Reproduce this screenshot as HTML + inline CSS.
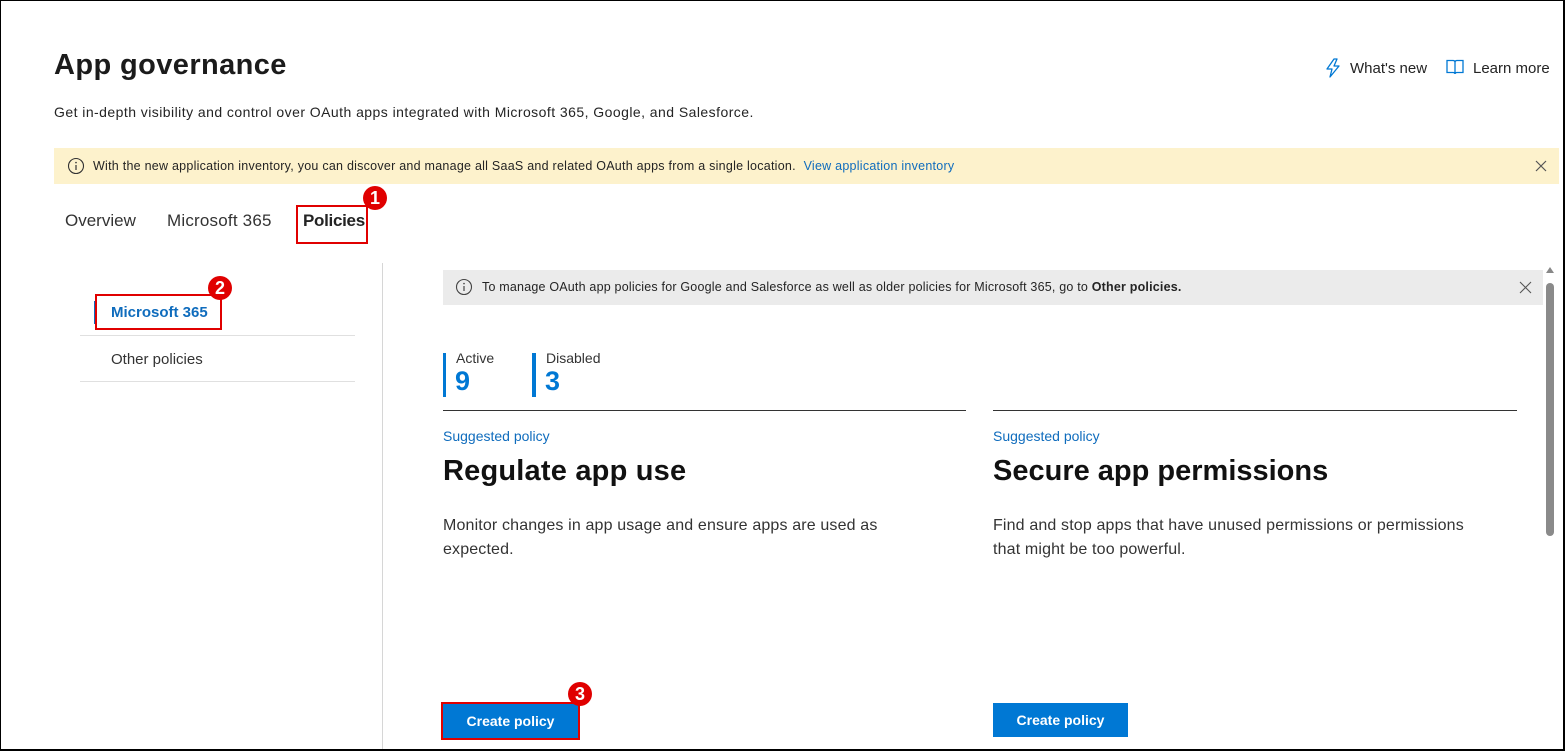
<!DOCTYPE html>
<html><head><meta charset="utf-8"><style>
*{margin:0;padding:0;box-sizing:border-box}
body{width:1565px;height:751px;overflow:hidden;background:#fff;font-family:"Liberation Sans",sans-serif;color:#242424;position:relative}
.a{position:absolute;white-space:nowrap}
.frame{position:absolute;left:0;top:0;width:1565px;height:751px;border:1px solid #000;border-right-width:2px;border-bottom-width:2px;pointer-events:none}
.badge{position:absolute;width:24px;height:24px;border-radius:50%;background:#e00000;color:#fff;font-weight:bold;font-size:18px;text-align:center;line-height:24px}
.red{position:absolute;border:2px solid #e00000}
.btn{position:absolute;background:#0078d4;color:#fff;font-weight:bold;font-size:14px;text-align:center;line-height:34px;height:34px}
</style></head><body>
<div class="a" style="left:54px;top:49px;font-size:29px;font-weight:bold;color:#1b1b1b;letter-spacing:0.4px">App governance</div>
<div class="a" style="left:54px;top:104px;font-size:14px;letter-spacing:0.45px">Get in-depth visibility and control over OAuth apps integrated with Microsoft 365, Google, and Salesforce.</div>
<svg class="a" style="left:1325px;top:58px" width="16" height="20" viewBox="0 0 16 20"><path d="M9 1 L2 11 H7 L5 19 L14 8 H9 L12 1 Z" fill="none" stroke="#0078d4" stroke-width="1.3" stroke-linejoin="round"/></svg>
<div class="a" style="left:1350px;top:60px;font-size:15px">What's new</div>
<svg class="a" style="left:1446px;top:59px" width="18" height="16" viewBox="0 0 18 16"><path d="M1 1.5H7Q9 1.5 9 3.5V15Q9 13.5 7 13.5H1Z M17 1.5H11Q9 1.5 9 3.5V15Q9 13.5 11 13.5H17Z" fill="none" stroke="#0078d4" stroke-width="1.3"/></svg>
<div class="a" style="left:1473px;top:60px;font-size:15px">Learn more</div>
<div class="a" style="left:54px;top:148px;width:1505px;height:36px;background:#fdf2cc"></div>
<svg class="a" style="left:67px;top:157px" width="18" height="18" viewBox="0 0 18 18"><circle cx="9" cy="9" r="7.5" fill="none" stroke="#333" stroke-width="1.1"/><path d="M9 8v5" stroke="#333" stroke-width="1.2"/><circle cx="9" cy="5.6" r=".8" fill="#333"/></svg>
<div class="a" style="left:93px;top:159px;font-size:12.5px;letter-spacing:0.25px">With the new application inventory, you can discover and manage all SaaS and related OAuth apps from a single location. <span style="color:#0f6cbd;margin-left:4px">View application inventory</span></div>
<svg class="a" style="left:1534px;top:159px" width="14" height="14" viewBox="0 0 14 14"><path d="M2 2L12 12M12 2L2 12" stroke="#555" stroke-width="1.2"/></svg>
<div class="a" style="left:65px;top:211px;font-size:17px;color:#333">Overview</div>
<div class="a" style="left:167px;top:211px;font-size:17px;color:#333;letter-spacing:0.2px">Microsoft 365</div>
<div class="a" style="left:303px;top:211px;font-size:17px;font-weight:bold;color:#242424;letter-spacing:-0.3px">Policies</div>
<div class="a" style="left:303px;top:242px;width:59px;height:2px;background:#0f6cbd"></div>
<div class="red" style="left:296px;top:205px;width:72px;height:39px"></div>
<div class="badge" style="left:363px;top:186px">1</div>
<div class="a" style="left:94px;top:301px;width:3px;height:23px;background:#0f6cbd"></div>
<div class="a" style="left:111px;top:304px;font-size:15px;font-weight:bold;color:#0f6cbd">Microsoft 365</div>
<div class="red" style="left:95px;top:294px;width:127px;height:36px"></div>
<div class="badge" style="left:208px;top:276px">2</div>
<div class="a" style="left:80px;top:335px;width:275px;height:1px;background:#e0e0e0"></div>
<div class="a" style="left:111px;top:351px;font-size:15px;color:#333">Other policies</div>
<div class="a" style="left:80px;top:381px;width:275px;height:1px;background:#e0e0e0"></div>
<div class="a" style="left:382px;top:263px;width:1px;height:488px;background:#d6d6d6"></div>
<div class="a" style="left:443px;top:270px;width:1100px;height:35px;background:#ebebeb"></div>
<svg class="a" style="left:455px;top:278px" width="18" height="18" viewBox="0 0 18 18"><circle cx="9" cy="9" r="7.5" fill="none" stroke="#444" stroke-width="1.1"/><path d="M9 8v5" stroke="#444" stroke-width="1.2"/><circle cx="9" cy="5.6" r=".8" fill="#444"/></svg>
<div class="a" style="left:482px;top:280px;font-size:12.5px;letter-spacing:0.2px">To manage OAuth app policies for Google and Salesforce as well as older policies for Microsoft 365, go to <b>Other policies.</b></div>
<svg class="a" style="left:1519px;top:281px" width="13" height="13" viewBox="0 0 13 13"><path d="M1 1L12 12M12 1L1 12" stroke="#555" stroke-width="1.1"/></svg>
<div class="a" style="left:443px;top:353px;width:3px;height:44px;background:#0078d4"></div>
<div class="a" style="left:456px;top:350px;font-size:14px;color:#333">Active</div>
<div class="a" style="left:455px;top:366px;font-size:27px;font-weight:bold;color:#0078d4">9</div>
<div class="a" style="left:532px;top:353px;width:4px;height:44px;background:#0078d4"></div>
<div class="a" style="left:546px;top:350px;font-size:14px;color:#333">Disabled</div>
<div class="a" style="left:545px;top:366px;font-size:27px;font-weight:bold;color:#0078d4">3</div>
<div class="a" style="left:443px;top:410px;width:523px;height:1px;background:#333"></div>
<div class="a" style="left:993px;top:410px;width:524px;height:1px;background:#333"></div>
<div class="a" style="left:443px;top:428px;font-size:14px;color:#0f6cbd">Suggested policy</div>
<div class="a" style="left:993px;top:428px;font-size:14px;color:#0f6cbd">Suggested policy</div>
<div class="a" style="left:443px;top:455px;font-size:29px;font-weight:bold;color:#111;letter-spacing:0.2px">Regulate app use</div>
<div class="a" style="left:993px;top:455px;font-size:29px;font-weight:bold;color:#111">Secure app permissions</div>
<div class="a" style="left:443px;top:514px;font-size:16px;line-height:24px;white-space:normal;width:470px;color:#333;letter-spacing:0.15px">Monitor changes in app usage and ensure apps are used as expected.</div>
<div class="a" style="left:993px;top:514px;font-size:16px;line-height:24px;white-space:normal;width:500px;color:#333;letter-spacing:0.15px">Find and stop apps that have unused permissions or permissions that might be too powerful.</div>
<div class="btn" style="left:443px;top:704px;width:135px">Create policy</div>
<div class="red" style="left:441px;top:702px;width:139px;height:38px"></div>
<div class="badge" style="left:568px;top:682px">3</div>
<div class="btn" style="left:993px;top:703px;width:135px">Create policy</div>
<div class="a" style="left:1546px;top:267px;width:0;height:0;border-left:4px solid transparent;border-right:4px solid transparent;border-bottom:6px solid #888"></div>
<div class="a" style="left:1546px;top:283px;width:8px;height:253px;border-radius:4px;background:#8a8a8a"></div>
<div class="frame"></div>
</body></html>
